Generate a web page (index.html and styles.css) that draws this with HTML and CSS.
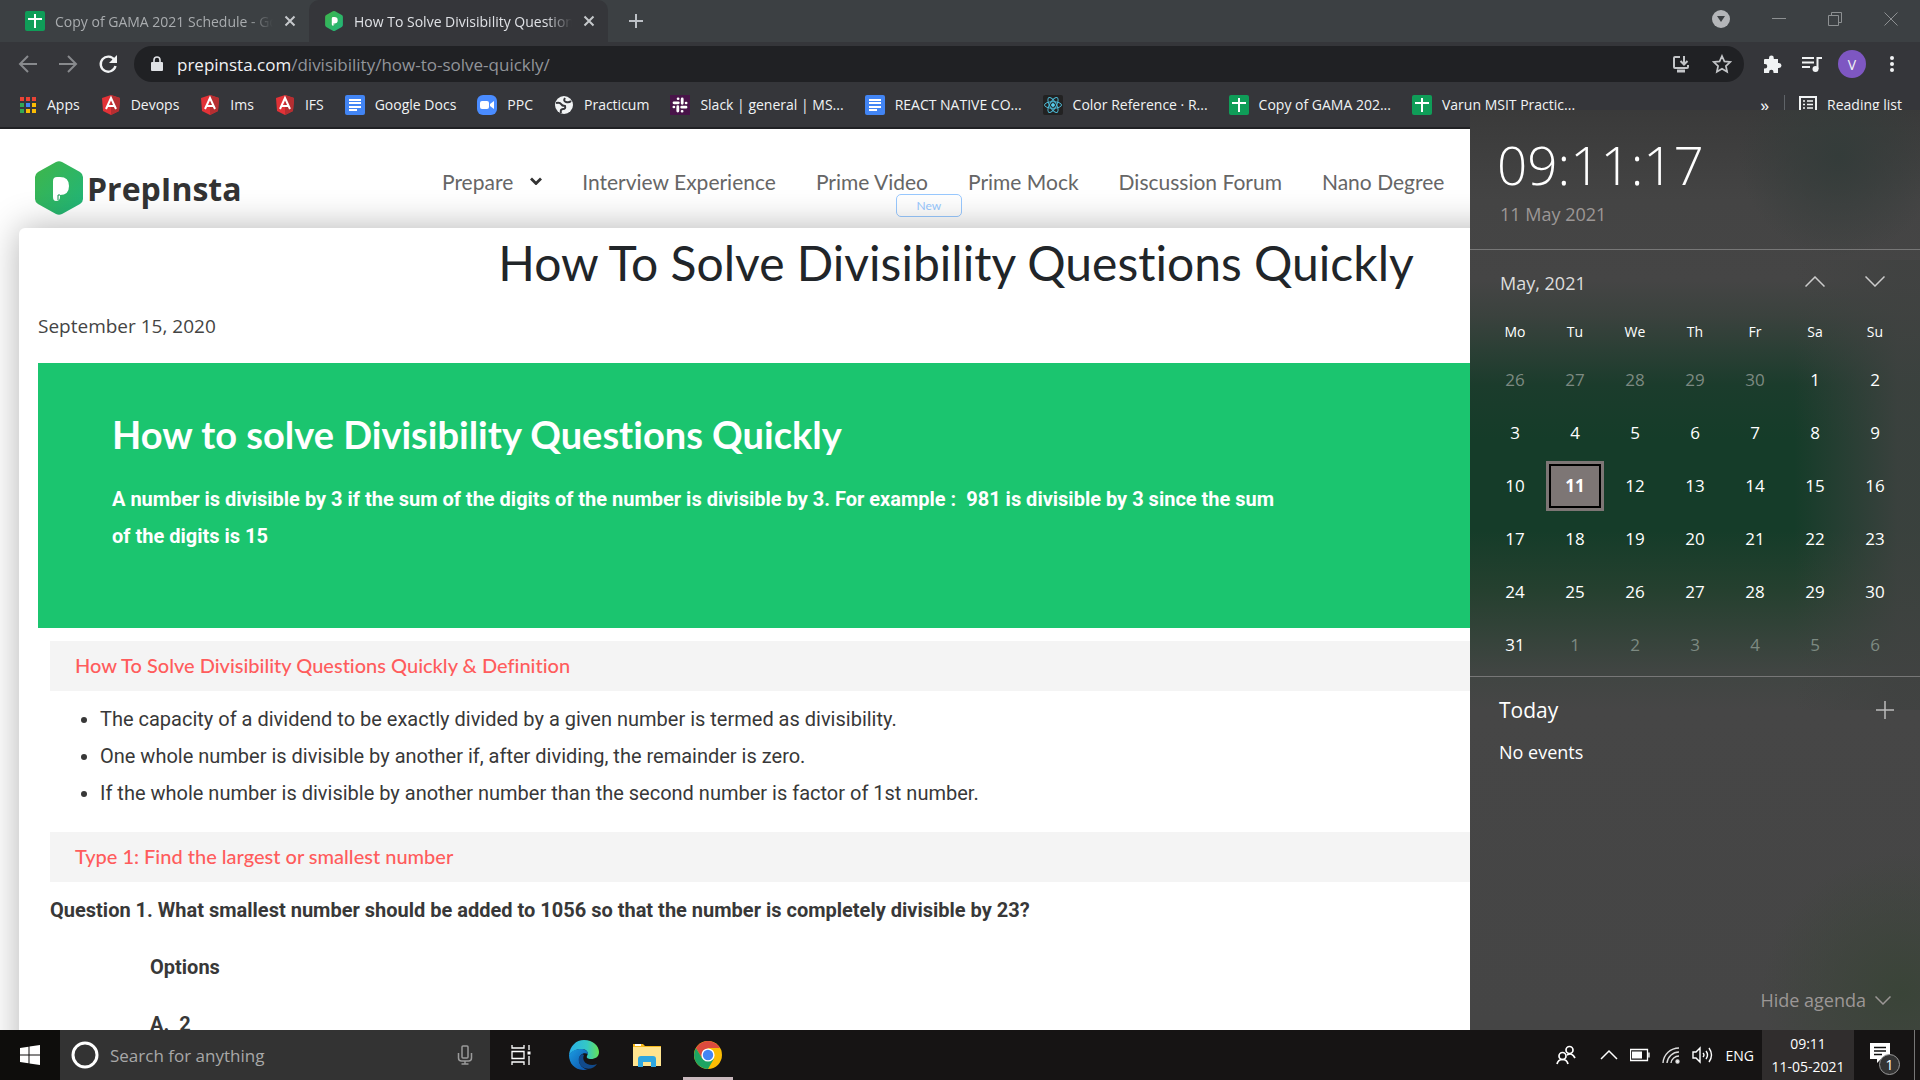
FILE: index.html
```html
<!DOCTYPE html>
<html lang="en">
<head>
<meta charset="utf-8">
<title>How To Solve Divisibility Questions Quickly</title>
<link rel="stylesheet" href="styles.css">
</head>
<body>
<svg class="defs" aria-hidden="true">
  <defs>
    <linearGradient id="leaf" x1="0" y1="0" x2="1" y2="1"><stop offset="0" stop-color="#3fb649"/><stop offset="1" stop-color="#1fb57c"/></linearGradient>
    <linearGradient id="edgeTop" x1="0" y1="0" x2="1" y2="0"><stop offset="0" stop-color="#28afea"/><stop offset=".6" stop-color="#35c8c4"/><stop offset="1" stop-color="#65e256"/></linearGradient>
    <linearGradient id="edgeLow" x1="0" y1="0" x2="1" y2="1"><stop offset="0" stop-color="#1b9de2"/><stop offset="1" stop-color="#0c4fa8"/></linearGradient>
    <symbol id="sheet" viewBox="0 0 20 20"><rect width="20" height="20" rx="2" fill="#0f9d58"/><path d="M10 3v14M3 8h14" stroke="#fff" stroke-width="2"/></symbol>
    <symbol id="doc" viewBox="0 0 20 20"><rect width="20" height="20" rx="2" fill="#4285f4"/><path d="M4 5h12M4 8h12M4 12h12M4 15h8" stroke="#fff" stroke-width="2"/></symbol>
    <symbol id="angular" viewBox="0 0 20 20"><path d="M10 0l9 3-1 13-8 4-8-4L1 3z" fill="#e23237"/><path d="M10 0l9 3-1 13-8 4z" fill="#b52e31"/><path d="M5 14l5-11 5 11M7 11h6" stroke="#fff" stroke-width="2" fill="none"/></symbol>
    <symbol id="hex" viewBox="0 0 48 54"><path d="M21 1q3-1.500 6 0l18 10q3 2 3 5v22q0 3-3 5L27 53q-3 1.500-6 0L3 43q-3-2-3-5V16q0-3 3-5z" fill="url(#leaf)"/><path d="M18 20q0-4 4-4h3q9 0 9 9t-9 9v2q0 4-4 4-3 0-3-4z" fill="#fff"/><path d="M25 34h-2v5" stroke="#14914f" stroke-width="1" fill="none"/></symbol>
    <symbol id="cross" viewBox="0 0 12 12"><path d="M1.500 1.500l9 9M10.500 1.500l-9 9" stroke="currentColor" stroke-width="2"/></symbol>
  </defs>
</svg>
<div class="desktop">
  <section class="browser">
    <header class="tabs">
      <div class="tab">
        <svg class="ico20"><use href="#sheet"/></svg><span class="tab-title">Copy of GAMA 2021 Schedule - Google Sheets</span>
        <button class="x" aria-label="Close tab"><svg class="ico12"><use href="#cross"/></svg></button>
      </div>
      <div class="tab active">
        <svg class="ico20"><use href="#hex"/></svg><span class="tab-title">How To Solve Divisibility Questions Quickly</span>
        <button class="x" aria-label="Close tab"><svg class="ico12"><use href="#cross"/></svg></button>
      </div>
      <button class="plus" aria-label="New tab"><svg class="ico16" viewBox="0 0 16 16"><path d="M8 1v14M1 8h14" stroke="#bdc1c6" stroke-width="2"/></svg></button>
      <div class="win">
        <button aria-label="Search tabs"><svg class="ico18" viewBox="0 0 18 18"><circle cx="9" cy="9" r="9" fill="#b4b6b9"/><path d="M5 6h8l-4 6z" fill="#3c4043"/></svg></button>
        <button aria-label="Minimise"><svg class="ico14" viewBox="0 0 14 14"><path d="M0 6.500h14" stroke="#8d9092"/></svg></button>
        <button aria-label="Restore"><svg class="ico14" viewBox="0 0 14 14" fill="none" stroke="#8d9092"><path d="M.5 3.500h10v10H.5zM3.500 3V.5h10v10h-3"/></svg></button>
        <button aria-label="Close"><svg class="ico14" viewBox="0 0 14 14"><path d="M.5.5l13 13M13.500.5l-13 13" stroke="#8d9092"/></svg></button>
      </div>
    </header>
    <div class="toolbar">
      <button aria-label="Back"><svg class="ico20" viewBox="0 0 20 20" fill="none" stroke="#888a8d" stroke-width="2"><path d="M19 10H2M10 2l-8 8 8 8"/></svg></button>
      <button aria-label="Forward"><svg class="ico20" viewBox="0 0 20 20" fill="none" stroke="#888a8d" stroke-width="2"><path d="M1 10h17M10 2l8 8-8 8"/></svg></button>
      <button aria-label="Reload"><svg class="ico20" viewBox="0 0 20 20"><path d="M16.500 6A7.500 7.500 0 1 0 17.500 12" fill="none" stroke="#f1f3f4" stroke-width="2.400"/><path d="M19 1v8h-8z" fill="#f1f3f4"/></svg></button>
      <div class="omnibox">
        <svg class="lock" viewBox="0 0 12 16"><rect y="6" width="12" height="9" rx="1" fill="#dfe1e5"/><path d="M3 7V4a3 3 0 0 1 6 0v3" fill="none" stroke="#dfe1e5" stroke-width="1.600"/></svg>
        <a class="url" href="#top">prepinsta.com<span>/divisibility/how-to-solve-quickly/</span></a>
        <button aria-label="Install"><svg class="ico18" viewBox="0 0 18 18" fill="none" stroke="#c3c5c8" stroke-width="2"><path d="M8 2H3Q2 2 2 3v9q0 1 1 1h12q1 0 1-1v-2"/><path d="M12 1v8M8.500 6l3.500 3.500L15.500 6"/><path d="M5 16h8" stroke-width="3"/></svg></button>
        <button aria-label="Bookmark"><svg class="ico20" viewBox="0 0 20 20"><path d="M10 2l2.400 5.400 5.900.6-4.400 4 1.200 5.800L10 14.800l-5.100 3 1.200-5.800-4.400-4 5.900-.6z" fill="none" stroke="#c3c5c8" stroke-width="1.700"/></svg></button>
      </div>
      <button aria-label="Extensions"><svg class="ico20" viewBox="0 0 20 20"><path d="M3 5h4V4a2.400 2.400 0 0 1 4.800 0v1H16v4h1a2.400 2.400 0 0 1 0 5h-1v5h-4.500v-1a2.200 2.200 0 0 0-4.400 0v1H2v-4.500h1a2.200 2.200 0 0 0 0-4.500H2V6q0-1 1-1z" fill="#f1f3f4"/></svg></button>
      <button aria-label="Media"><svg class="ico20" viewBox="0 0 20 20"><path d="M0 4h12M0 8.500h12M0 13h8" stroke="#f1f3f4" stroke-width="2"/><path d="M15.500 15V4H20" fill="none" stroke="#f1f3f4" stroke-width="2"/><circle cx="13.500" cy="15" r="3" fill="#f1f3f4"/></svg></button>
      <button class="avatar" aria-label="Profile">V</button>
      <button aria-label="Menu"><svg class="ico20" viewBox="0 0 20 20" fill="#f1f3f4"><circle cx="10" cy="4" r="2"/><circle cx="10" cy="10" r="2"/><circle cx="10" cy="16" r="2"/></svg></button>
    </div>
    <nav class="bookmarks">
      <a href="#apps"><svg class="ico18" viewBox="0 0 18 18"><path d="M1 3h16" stroke="#ea4335" stroke-width="4" stroke-dasharray="4 2"/><path d="M1 9h4M1 15h4" stroke="#34a853" stroke-width="4"/><path d="M7 9h4" stroke="#4285f4" stroke-width="4"/><path d="M13 9h4M7 15h4M13 15h4" stroke="#fbbc04" stroke-width="4"/></svg>Apps</a>
      <a href="#devops"><svg class="ico20"><use href="#angular"/></svg>Devops</a>
      <a href="#ims"><svg class="ico20"><use href="#angular"/></svg>Ims</a>
      <a href="#ifs"><svg class="ico20"><use href="#angular"/></svg>IFS</a>
      <a href="#docs"><svg class="ico20"><use href="#doc"/></svg>Google Docs</a>
      <a href="#ppc"><svg class="ico20" viewBox="0 0 20 20"><rect width="20" height="20" rx="6" fill="#4a8cff"/><rect x="3" y="6" width="9" height="8" rx="2" fill="#fff"/><path d="M13 9l4-3v8l-4-3z" fill="#fff"/></svg>PPC</a>
      <a href="#practicum"><svg class="ico20" viewBox="0 0 20 20"><circle cx="10" cy="10" r="9" fill="#f1f3f4"/><path d="M2 8q4-1 5 1t4 2q1 3-2 3t-2 4" fill="none" stroke="#35363a" stroke-width="2"/><path d="M11 3q-2 3 1 4t5-1" fill="none" stroke="#35363a" stroke-width="2"/></svg>Practicum</a>
      <a href="#slack"><svg class="ico20" viewBox="0 0 20 20"><rect width="20" height="20" fill="#481449"/><path d="M8.300 7.800H4M12.200 8.300V4M11.700 12.200H16M7.800 11.700V16" stroke="#fff" stroke-width="2.800" stroke-linecap="round"/><path d="M8 3.800h.2M16 8h.2M12 16.200h.2M3.800 12h.2" stroke="#fff" stroke-width="2.600" stroke-linecap="round"/></svg>Slack | general | MS...</a>
      <a href="#native"><svg class="ico20"><use href="#doc"/></svg>REACT NATIVE CO...</a>
      <a href="#color"><svg class="ico20" viewBox="0 0 20 20" fill="none" stroke="#4cb8d4"><rect width="20" height="20" rx="2" fill="#222" stroke="none"/><ellipse cx="10" cy="10" rx="8.500" ry="3.300"/><ellipse cx="10" cy="10" rx="8.500" ry="3.300" transform="rotate(60 10 10)"/><ellipse cx="10" cy="10" rx="8.500" ry="3.300" transform="rotate(120 10 10)"/><circle cx="10" cy="10" r="1.500" fill="#61dafb"/></svg>Color Reference · R...</a>
      <a href="#gama"><svg class="ico20"><use href="#sheet"/></svg>Copy of GAMA 202...</a>
      <a href="#varun"><svg class="ico20"><use href="#sheet"/></svg>Varun MSIT Practic...</a>
      <button class="more" aria-label="More bookmarks">»</button>
      <a class="reading" href="#reading"><svg class="ico18" viewBox="0 0 18 18"><path d="M1 1h16v16H1z" fill="none" stroke="#f1f3f4" stroke-width="2"/><path d="M4 5h2M4 8.500h2M4 12h2M8 5h6M8 8.500h6M8 12h6" stroke="#f1f3f4" stroke-width="1.500"/></svg>Reading list</a>
    </nav>

    <main class="page" id="top">
      <header class="site">
        <a class="logo" href="#home"><svg viewBox="0 0 48 54"><use href="#hex"/></svg>PrepInsta</a>
        <nav class="menu">
          <a href="#prepare">Prepare<svg class="down" viewBox="0 0 12 8"><path d="M1 1.500l5 5 5-5" fill="none" stroke="#333" stroke-width="2.800"/></svg></a>
          <a href="#interview">Interview Experience</a>
          <a href="#video">Prime Video<span class="new">New</span></a>
          <a href="#mock">Prime Mock</a>
          <a href="#forum">Discussion Forum</a>
          <a href="#nano">Nano Degree</a>
        </nav>
      </header>
      <article class="card">
        <h1>How To Solve Divisibility Questions Quickly</h1>
        <time class="date">September 15, 2020</time>
        <div class="hero">
          <h2>How to solve Divisibility Questions Quickly</h2>
          <p>A number is divisible by 3 if the sum of the digits of the number is divisible by 3. For example :&nbsp; 981 is divisible by 3 since the sum of the digits is 15</p>
        </div>
        <div class="body">
          <h3>How To Solve Divisibility Questions Quickly &amp; Definition</h3>
          <ul>
            <li>The capacity of a dividend to be exactly divided by a given number is termed as divisibility.</li>
            <li>One whole number is divisible by another if, after dividing, the remainder is zero.</li>
            <li>If the whole number is divisible by another number than the second number is factor of 1st number.</li>
          </ul>
          <h3>Type 1: Find the largest or smallest number</h3>
          <p class="q">Question 1. What smallest number should be added to 1056 so that the number is completely divisible by 23?</p>
          <div class="options"><p>Options</p><p>A.&nbsp; 2</p></div>
        </div>
      </article>
    </main>
  </section>

  <aside class="flyout">
    <section class="clock"><time class="now">09:11:17</time><a class="today-date" href="#today">11 May 2021</a></section>
    <section class="cal">
      <div class="month"><button class="name">May, 2021</button>
        <button class="arrow" aria-label="Previous month"><svg viewBox="0 0 20 11"><path d="M.5 10.500L10 1l9.500 9.500"/></svg></button>
        <button class="arrow" aria-label="Next month"><svg viewBox="0 0 20 11"><path d="M.5.5L10 10 19.500.5"/></svg></button>
      </div>
      <table>
        <thead><tr><th>Mo</th><th>Tu</th><th>We</th><th>Th</th><th>Fr</th><th>Sa</th><th>Su</th></tr></thead>
        <tbody>
          <tr><td class="dim">26</td><td class="dim">27</td><td class="dim">28</td><td class="dim">29</td><td class="dim">30</td><td>1</td><td>2</td></tr>
          <tr><td>3</td><td>4</td><td>5</td><td>6</td><td>7</td><td>8</td><td>9</td></tr>
          <tr><td>10</td><td><span class="sel">11</span></td><td>12</td><td>13</td><td>14</td><td>15</td><td>16</td></tr>
          <tr><td>17</td><td>18</td><td>19</td><td>20</td><td>21</td><td>22</td><td>23</td></tr>
          <tr><td>24</td><td>25</td><td>26</td><td>27</td><td>28</td><td>29</td><td>30</td></tr>
          <tr><td>31</td><td class="dim">1</td><td class="dim">2</td><td class="dim">3</td><td class="dim">4</td><td class="dim">5</td><td class="dim">6</td></tr>
        </tbody>
      </table>
    </section>
    <section class="agenda">
      <div class="agenda-head"><h2>Today</h2><button aria-label="New event"><svg class="ico18" viewBox="0 0 18 18"><path d="M9 0v18M0 9h18" stroke="#bcbcbc" stroke-width="1.500"/></svg></button></div>
      <p>No events</p>
      <button class="hide">Hide agenda<svg viewBox="0 0 16 9"><path d="M.5.500L8 8 15.500.500"/></svg></button>
    </section>
  </aside>

  <footer class="taskbar">
    <button class="start" aria-label="Start"><svg class="ico20" viewBox="0 0 20 20" fill="#fff"><path d="M0 3l8.500-1.300v7.800H0zM9.500 1.500L20 0v9.500H9.500zM0 10.500h8.500v7.800L0 17zM9.500 10.500H20V20L9.500 18.500z"/></svg></button>
    <label class="search"><svg class="ring" viewBox="0 0 28 28"><circle cx="14" cy="14" r="12" fill="none" stroke="#fff" stroke-width="3"/></svg>
      <input type="text" aria-label="Search" placeholder="Search for anything">
      <svg class="mic" viewBox="0 0 16 20" fill="none" stroke="#9b9b9b" stroke-width="1.500"><rect x="5" y="1" width="6" height="12" rx="1"/><path d="M1.500 8v5q0 3 3 3h7q3 0 3-3V8M8 16v3M4.500 19h7"/></svg></label>
    <button class="app" aria-label="Task view"><svg class="ico22" viewBox="0 0 22 22" fill="none" stroke="#fff" stroke-width="1.300"><path d="M2 1v3h12V1M2 7.500h12v7H2zM2 21v-3h12v3M19 1v5M19 12v9"/><path d="M19 7.500v3" stroke-width="3"/></svg></button>
    <button class="app" aria-label="Edge"><svg class="ico30" viewBox="0 0 30 30"><path d="M0 15C1 6 7 0 15 0c9 0 15 6 15 12 0 5-4 7-8 7-3 0-5-1-4-3 2-3 0-7-5-7C7 9 2 12 0 15z" fill="url(#edgeTop)"/><path d="M0 15c2-4 7-6 12-6 4 0 7 2 7 5-4-2-9 0-9 6 0 5 4 9 9 9.500C8 32 0 25 0 15z" fill="url(#edgeLow)"/><path d="M13 14c-3 2-4 5-3 8 2 8 14 9 18 2-4 2-11 1-13-3-1-2-1-4 0-6z" fill="#114a8b"/></svg></button>
    <button class="app" aria-label="File Explorer"><svg class="ico28" viewBox="0 0 28 28"><path d="M0 3h10l2 2h16v6H0z" fill="#f5b81c"/><rect y="6" width="28" height="19" fill="#ffe48f"/><path d="M2 4h6" stroke="#fff" stroke-width="2"/><path d="M5 26v-8q0-3 3-3h12q3 0 3 3v8h-5v-5h-8v5z" fill="#2ea7e0"/></svg></button>
    <button class="app on" aria-label="Chrome"><svg class="ico28" viewBox="0 0 28 28"><circle cx="14" cy="14" r="14" fill="#fbbc04"/><path d="M14 7h12.100A14 14 0 0 0 1.900 7L8 17z" fill="#dd4b3e"/><path d="M1.900 7A14 14 0 0 0 14 28l6-10.500L14 14 8 17z" fill="#1da462"/><circle cx="14" cy="14" r="6.600" fill="#fff"/><circle cx="14" cy="14" r="5.200" fill="#4285f4"/></svg></button>
    <div class="tray">
      <button class="people" aria-label="People"><svg class="ico20" viewBox="0 0 20 20" fill="none" stroke="#fff" stroke-width="1.700"><circle cx="13.500" cy="5" r="3.500"/><circle cx="6.500" cy="11" r="3.500"/><path d="M1 19q1-4.500 5.500-4.500T12 19M11 10q5-3 8 3"/></svg></button>
      <button aria-label="Hidden icons"><svg class="ico18" viewBox="0 0 18 18"><path d="M1 13l8-8 8 8" fill="none" stroke="#fff" stroke-width="1.500"/></svg></button>
      <button aria-label="Battery"><svg class="ico20" viewBox="0 0 20 20"><path d="M.5 4.500h17v11H.5zM19 7.500v5" fill="none" stroke="#fff" stroke-width="1.300"/><rect x="2" y="6.500" width="10" height="7" fill="#fff"/></svg></button>
      <button aria-label="Wi-Fi"><svg class="ico18" viewBox="0 0 18 18" fill="none" stroke="#ddd" stroke-width="1.400"><path d="M1 17A16 16 0 0 1 17 2M5 17A12 12 0 0 1 17 6M9 17a8 8 0 0 1 8-7"/><circle cx="15.500" cy="15.500" r="1.500" fill="#fff"/></svg></button>
      <button aria-label="Volume"><svg class="ico22" viewBox="0 0 22 20" fill="none" stroke="#fff" stroke-width="1.400"><path d="M1 7h3l4-4v14l-4-4H1zM11 8q2 2 0 4M14 6q3 4 0 8M17 3q5 7 0 14"/></svg></button>
      <button class="lang">ENG</button>
      <button class="time"><span>09:11</span><span>11-05-2021</span></button>
      <button class="note" aria-label="Notifications"><svg class="ico20" viewBox="0 0 20 20"><path d="M0 0h20v16h-9l-4 4v-4H0z" fill="#fff"/><path d="M4 4.500h12M4 8h12M4 11.500h8" stroke="#111" stroke-width="1.500"/></svg><span class="count">1</span></button>
    </div>
  </footer>
</div>
</body>
</html>
```
FILE: styles.css
```css
* { box-sizing: border-box; }
body { margin: 0; font-family: "Open Sans", "Noto Sans", sans-serif; font-variant-ligatures: none; overflow: hidden; }
button { border: 0; background: none; padding: 0; color: inherit; font: inherit; display: flex; align-items: center; justify-content: center; }
a { color: inherit; text-decoration: none; }
svg { display: block; flex: none; }
h1, h2, h3, p, ul { margin: 0; }
.defs { position: absolute; width: 0; height: 0; }
.ico12 { width: 12px; height: 12px; }
.ico14 { width: 14px; height: 14px; }
.ico16 { width: 16px; height: 16px; }
.ico18 { width: 18px; height: 18px; }
.ico20 { width: 20px; height: 20px; }
.ico22 { width: 22px; height: 22px; }
.ico28 { width: 28px; height: 28px; }
.ico30 { width: 30px; height: 30px; }

.desktop { position: relative; height: 100vh; display: flex; flex-direction: column; overflow: hidden; }
.browser { flex: 1; min-height: 0; display: flex; flex-direction: column; background: #35363a; color: #f1f3f4; }

.tabs { display: flex; height: 42px; background: #3c4043; font-size: 14px; }
.tab { flex: 0 1 309px; min-width: 0; display: flex; align-items: center; gap: 10px; padding: 0 12px 0 25px; color: #a9acaf; }
.tab.active { flex-basis: 299px; padding-left: 15px; background: #35363a; color: #dfe1e5; border-radius: 10px 10px 0 0; }
.tab-title { flex: 1; min-width: 0; white-space: nowrap; overflow: hidden; mask-image: linear-gradient(90deg, #000 88%, transparent); }
.x { width: 14px; color: #c5c8cb; }
.plus { width: 56px; }
.win { margin-left: auto; display: flex; gap: 42px; padding: 0 22px 4px 0; }

.toolbar { display: flex; align-items: center; gap: 20px; height: 44px; padding: 2px 18px; }
.omnibox { flex: 1; display: flex; align-items: center; gap: 22px; height: 36px; margin-right: -2px; margin-left: -4px; padding: 0 12px 0 17px; border-radius: 18px; background: #202124; font-size: 17px; }
.lock { width: 12px; height: 16px; }
.url { flex: 1; margin-left: -8px; }
.url span { color: #92959a; }
.avatar { width: 28px; height: 28px; margin: 0 -4px; border-radius: 50%; background: #7e57c2; font-size: 14px; }

.bookmarks { display: flex; align-items: center; gap: 21px; height: 43px; padding: 0 18px 4px 19px; border-bottom: 2px solid #202124; font-size: 14px; white-space: nowrap; }
.bookmarks a { display: flex; align-items: center; gap: 10px; }
.more { margin-left: auto; font-size: 18px; }
.bookmarks .reading { padding-left: 14px; margin-left: -6px; border-left: 1px solid #5f6368; }

.page { flex: 1; min-height: 0; overflow: hidden; background: #fff; color: #383838; }
.site { display: flex; height: 99px; padding: 0 35px; font-family: Lato, sans-serif; }
.logo { display: flex; align-items: center; gap: 4px; width: 407px; height: 118px; font: 700 32px "Open Sans", sans-serif; color: #333; }
.logo svg { width: 48px; height: 54px; }
.menu { display: flex; gap: 40px; height: 104px; align-items: center; font-size: 21px; color: #666; white-space: nowrap; }
.menu a { position: relative; display: flex; align-items: center; gap: 17px; }
.down { width: 12px; height: 8px; }
.new { position: absolute; left: 80px; top: 25px; width: 66px; height: 23px; border: 1px solid #99c9ff; border-radius: 5px; color: #99c9ff; font-size: 12px; line-height: 21px; text-align: center; }

.card { position: relative; min-height: 900px; margin: 0 27px 0 19px; padding: 0 19px; border-radius: 6px 6px 0 0; background: #fff; box-shadow: 0 0 36px rgba(0, 0, 0, .3); }
.card h1 { padding: 4px 0 2px; font-family: Lato, sans-serif; font-size: 48px; font-weight: 400; line-height: 62px; color: #212529; text-align: center; }
.date { display: block; padding: 14px 0 21px; font-size: 19px; line-height: 32px; color: #444; }
.hero { height: 265px; padding: 46px 74px; background: #1bc56f; color: #fff; }
.hero h2 { font-family: Lato, sans-serif; font-size: 38px; font-weight: 700; line-height: 50px; }
.hero p { max-width: 1180px; padding-top: 22px; font-family: Roboto, sans-serif; font-size: 20px; font-weight: 700; line-height: 37px; }
.body { padding: 13px 12px; font-family: Roboto, sans-serif; font-size: 20px; line-height: 37px; }
.body h3 { padding: 0 25px 2px; background: #f4f4f4; color: #ff5c5c; font-family: Lato, sans-serif; font-size: 20px; font-weight: 500; line-height: 48px; }
.body ul { padding: 10px 0 20px 50px; }
.q { padding-top: 10px; font-weight: 700; }
.options { padding: 20px 100px; display: grid; gap: 20px; font-weight: 700; }
h1, h2, h3, .q, .menu { font-variant-ligatures: none; }

.flyout { position: absolute; right: 0; top: 110px; bottom: 50px; width: 450px; display: flex; flex-direction: column; color: #fff;
  background:
    radial-gradient(circle at 82% 5%, #343c3a 0, rgba(52, 60, 58, 0) 100px),
    radial-gradient(circle at 96% 96%, #3a4438 0, rgba(58, 68, 56, 0) 140px),
    linear-gradient(90deg, rgba(68, 68, 68, 0) 72%, rgba(64, 66, 65, .85) 95%) 0 150px / 100% 450px no-repeat,
    linear-gradient(#3a3a3a 0, #444 90px, #454545 170px, #3b423e 205px, #1b3c2c 275px, #153c29 330px, #153c29 420px, #25402f 480px, #404542 560px, #464646 600px, #454545 100%); }
.clock { height: 140px; padding: 20px 27px 0; border-bottom: 1px solid #777; display: flex; flex-direction: column; }
.now { font-size: 53px; font-weight: 300; line-height: 70px; }
.today-date { margin-left: 3px; font-size: 18px; line-height: 28px; color: #9c9796; }
.cal { height: 427px; padding: 0 15px; border-bottom: 1px solid #777; }
.month { display: flex; align-items: center; height: 62px; }
.name { margin: 4px auto 0 15px; font-size: 18px; color: #ddd; }
.arrow { width: 60px; height: 40px; }
.arrow svg { width: 20px; height: 11px; }
.arrow path, .hide path { fill: none; stroke: #ccc; stroke-width: 1.500; }
table { width: 100%; table-layout: fixed; border-collapse: collapse; }
th { height: 41px; padding: 0 0 2px; font-size: 14px; font-weight: 400; }
td { height: 53px; padding: 0; font-size: 17px; text-align: center; }
.dim { color: #7d8a82; }
.sel { display: flex; align-items: center; justify-content: center; width: 58px; height: 50px; margin: 0 auto; border: 3px solid #7d7675; background: #7d7675; box-shadow: inset 0 0 0 2px #000; font-weight: 700; }
.agenda { flex: 1; display: flex; flex-direction: column; padding: 14px 26px 15px 29px; }
.agenda-head { display: flex; justify-content: space-between; align-items: center; height: 38px; }
.agenda h2 { font-size: 21px; font-weight: 400; }
.agenda p { padding-top: 9px; font-size: 18px; line-height: 28px; }
.hide { margin: auto 3px 0 0; align-self: flex-end; gap: 9px; font-size: 18px; line-height: 30px; color: #9c9796; }
.hide svg { width: 16px; height: 9px; }
.hide path { stroke: #9c9796; }

.taskbar { display: flex; height: 50px; background: #161414; color: #fff; }
.start { width: 60px; background: #0e0d0c; }
.search { flex: 0 1 430px; display: flex; align-items: center; padding: 0 17px 0 11px; background: #333; }
.ring { width: 28px; height: 28px; }
.search input { flex: 1; min-width: 0; margin-left: 11px; padding: 0; border: 0; outline: 0; background: none; font: 400 17px "Open Sans", sans-serif; color: #fff; }
.search input::placeholder { color: #a8a8a8; opacity: 1; }
.mic { width: 16px; height: 20px; }
.app { width: 62px; }
.app + .app { width: 63px; }
.app + .app.on { box-shadow: inset 0 -3px #c9b8bd; width: 50px; margin-left: 5px; }
.tray { margin-left: auto; display: flex; gap: 12px; font-size: 15px; }
.people { margin-right: 12px; }
.lang { font-size: 14px; }
.time { width: 92px; margin: 0 4px 0 -4px; flex-direction: column; background: #302d2d; font-size: 14px; line-height: 23px; }
.note { position: relative; width: 45px; margin-right: 5px; padding-bottom: 4px; justify-content: flex-start; border-right: 1px solid #777; }
.count { position: absolute; left: 9px; top: 24px; width: 21px; height: 21px; border: 1px solid #999; border-radius: 50%; background: #333; font-size: 14px; line-height: 19px; text-align: center; }
```
